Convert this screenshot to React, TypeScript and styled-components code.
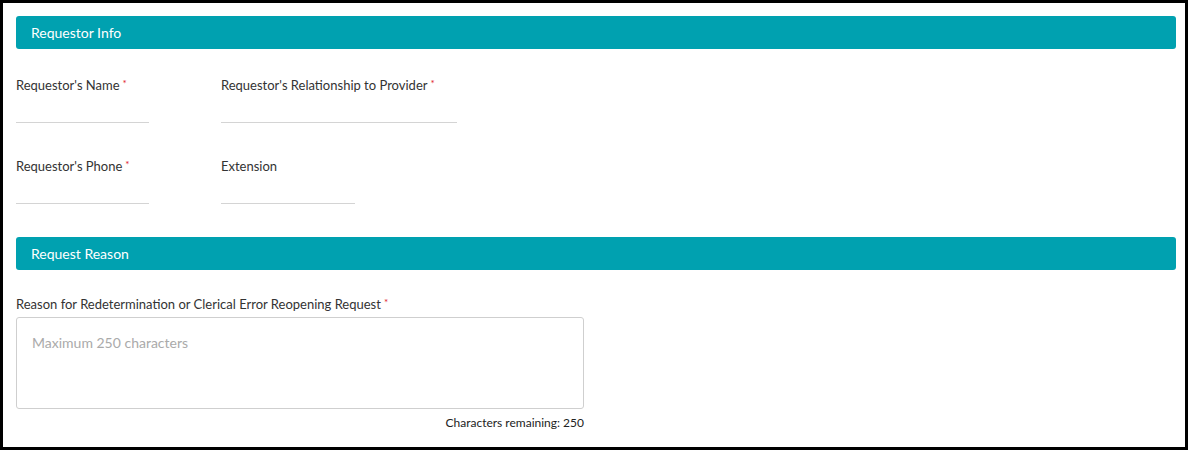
import React, { ReactElement, useState } from "react";
import styled, { createGlobalStyle } from "styled-components";

const GlobalStyle = createGlobalStyle`
  html, body {
    margin: 0;
    padding: 0;
    background: #fff;
  }
  body {
    font-family: Lato, "Liberation Sans", sans-serif;
    color: #333;
  }
`;

export default function App(): ReactElement {
  const [name, setName] = useState("");
  const [relationship, setRelationship] = useState("");
  const [phone, setPhone] = useState("");
  const [extension, setExtension] = useState("");
  const [reason, setReason] = useState("");

  const max = 250;

  return (
    <>
      <GlobalStyle />
      <Frame>
        <SectionBar>Requestor Info</SectionBar>

        <FieldRow>
          <Field $width={133}>
            <Label htmlFor="name">
              Requestor's Name<Required>*</Required>
            </Label>
            <LineInput
              id="name"
              value={name}
              onChange={(e) => setName(e.currentTarget.value)}
            />
          </Field>
          <Field $width={236}>
            <Label htmlFor="relationship">
              Requestor's Relationship to Provider<Required>*</Required>
            </Label>
            <LineInput
              id="relationship"
              value={relationship}
              onChange={(e) => setRelationship(e.currentTarget.value)}
            />
          </Field>
        </FieldRow>

        <FieldRow>
          <Field $width={133}>
            <Label htmlFor="phone">
              Requestor's Phone<Required>*</Required>
            </Label>
            <LineInput
              id="phone"
              value={phone}
              onChange={(e) => setPhone(e.currentTarget.value)}
            />
          </Field>
          <Field $width={134}>
            <Label htmlFor="extension">Extension</Label>
            <LineInput
              id="extension"
              value={extension}
              onChange={(e) => setExtension(e.currentTarget.value)}
            />
          </Field>
        </FieldRow>

        <SectionBar $spaced>Request Reason</SectionBar>

        <ReasonGroup>
          <Label htmlFor="reason">
            Reason for Redetermination or Clerical Error Reopening Request
            <Required>*</Required>
          </Label>
          <Textarea
            id="reason"
            maxLength={max}
            placeholder="Maximum 250 characters"
            value={reason}
            onChange={(e) => setReason(e.currentTarget.value)}
          />
          <Remaining>Characters remaining: {max - reason.length}</Remaining>
        </ReasonGroup>
      </Frame>
    </>
  );
}

const Frame = styled.div`
  box-sizing: border-box;
  width: 1188px;
  height: 450px;
  border: 3px solid #000;
  padding: 13px 9px 13px 13px;
  background: #fff;
`;

const SectionBar = styled.div<{ $spaced?: boolean }>`
  height: 33px;
  display: flex;
  align-items: center;
  padding: 0 15px;
  margin-top: ${(p) => (p.$spaced ? "33px" : "0")};
  background-color: #00a1b0;
  border-radius: 3px;
  color: #fff;
  font-size: 14px;
`;

const FieldRow = styled.div`
  display: flex;
  gap: 72px;
  margin-top: 28px;

  & + & {
    margin-top: 35px;
  }
`;

const Field = styled.div<{ $width: number }>`
  display: flex;
  flex-direction: column;
  width: ${(p) => p.$width}px;
`;

const Label = styled.label`
  display: block;
  height: 16px;
  font-size: 13px;
  line-height: 16px;
  color: #333;
  white-space: nowrap;
`;

const Required = styled.span`
  color: #e0202a;
  font-size: 10px;
  line-height: 0;
  margin-left: 3px;
  position: relative;
  top: -3px;
`;

const LineInput = styled.input`
  box-sizing: border-box;
  width: 100%;
  height: 30px;
  border: none;
  border-bottom: 1px solid #d4d4d4;
  background: transparent;
  font-family: inherit;
  font-size: 13px;
  padding: 0;

  &:focus {
    outline: none;
    border-bottom-color: #00a1b0;
  }
`;

const ReasonGroup = styled.div`
  margin-top: 26px;
  width: 568px;
  display: flex;
  flex-direction: column;
`;

const Textarea = styled.textarea`
  box-sizing: border-box;
  width: 568px;
  height: 92px;
  margin-top: 5px;
  padding: 16px 15px;
  border: 1px solid #cfcfcf;
  border-radius: 3px;
  font-family: inherit;
  font-size: 14px;
  line-height: 18px;
  color: #333;
  resize: none;

  &::placeholder {
    color: #aaa;
  }

  &:focus {
    outline: none;
    border-color: #00a1b0;
  }
`;

const Remaining = styled.div`
  align-self: flex-end;
  margin-top: 7px;
  font-size: 12px;
  line-height: 14px;
  color: #222;
`;
